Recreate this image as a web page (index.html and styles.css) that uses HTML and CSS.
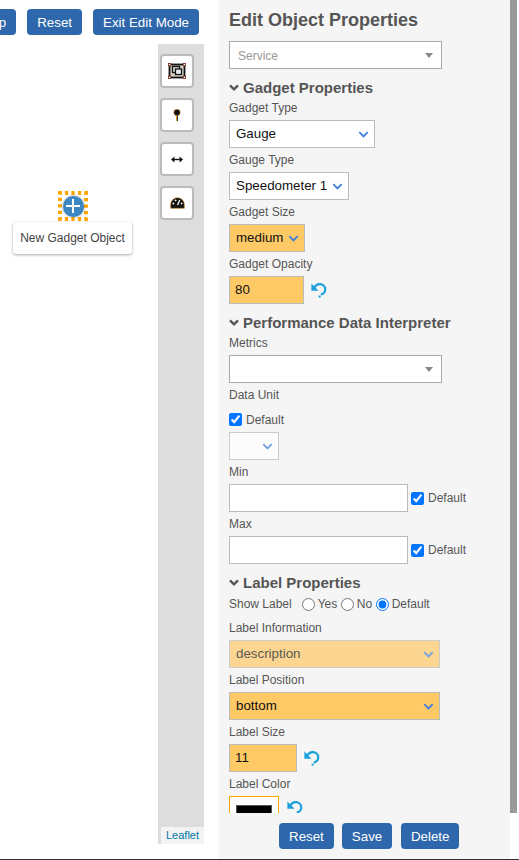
FILE: index.html
```html
<!DOCTYPE html>
<html lang="en">
<head>
  <meta charset="UTF-8">
  <title>Edit Object Properties</title>
  <link rel="stylesheet" href="styles.css">
</head>
<body>
  <svg class="defs" width="0" height="0">
    <symbol id="chev" viewBox="0 0 12 8"><path d="M1.2 1.4 6 6.2l4.8-4.8" fill="none" stroke="currentColor"/></symbol>
    <symbol id="undo" viewBox="0 0 16 16"><path d="M3.6 5.2C5 2.6 7.4 1.8 9.6 2.2c3 .6 4.9 3 4.6 5.8-.2 2.4-2 4-4.4 4.6" fill="none" stroke="#1ba1dc" stroke-width="2.2"/><path d="M.4 1.6v7.2h7.2z" fill="#1ba1dc"/><rect x="7.6" y="13.6" width="2" height="2" fill="#1ba1dc"/></symbol>
  </svg>

  <div class="page">
    <div class="left">
      <div class="topbar">
        <button class="btn cut">Map</button>
        <button class="btn">Reset</button>
        <button class="btn">Exit Edit Mode</button>
      </div>
      <div class="mapwrap">
        <div class="map">
          <div class="marker">
            <svg class="dots" width="30" height="30" viewBox="0 0 30 30"><rect x="2" y="2" width="26" height="26" fill="none" stroke="#ffa500" stroke-width="4" stroke-dasharray="3.25 3.25" stroke-dashoffset="1.6"/></svg>
            <span class="plus">
              <svg width="14" height="14" viewBox="0 0 14 14"><path d="M7 0v14M0 7h14" stroke="#fff" stroke-width="2"/></svg>
            </span>
          </div>
          <div class="tip">New Gadget Object</div>
        </div>
        <div class="strip">
          <div class="tool">
            <svg width="18" height="16" viewBox="0 0 18 16"><rect x="1.5" y="1.5" width="15" height="13" fill="#d8d2c4" stroke="#111" stroke-width="1.8"/><rect x="4.5" y="3.5" width="7" height="6" fill="#ddd" stroke="#111" stroke-width="1.3"/><rect x="7.5" y="6" width="6" height="5.5" fill="#eee" stroke="#111" stroke-width="1.3"/><g fill="#fff" stroke="#7a2a1a" stroke-width=".8"><rect x="0.4" y="0.4" width="2.4" height="2.4"/><rect x="15.2" y="0.4" width="2.4" height="2.4"/><rect x="0.4" y="13.2" width="2.4" height="2.4"/><rect x="15.2" y="13.2" width="2.4" height="2.4"/></g></svg>
          </div>
          <div class="tool">
            <svg width="8" height="12" viewBox="0 0 8 12"><path d="M3 6h1v6H3z" fill="#f39c12"/><path d="M4 6h1v6H4z" fill="#1a3a6a"/><circle cx="4" cy="3.4" r="3.2" fill="#111" stroke="#f5a623" stroke-width=".5"/></svg>
          </div>
          <div class="tool">
            <svg width="12" height="7" viewBox="0 0 12 7"><path d="M2 3.5h8" stroke="#111" stroke-width="1.4"/><path d="M0 3.5l3.4-3v6zM12 3.5l-3.4-3v6z" fill="#111"/></svg>
          </div>
          <div class="tool">
            <svg width="15" height="12" viewBox="0 0 15 12"><path d="M.7 11.3V7.5a6.8 6.8 0 0 1 13.6 0v3.8z" fill="#111" stroke="#c77a1a" stroke-width=".6"/><path d="M7.5 8 9.8 3" stroke="#fff" stroke-width="1.3"/><circle cx="3.4" cy="6.5" r=".9" fill="#fff"/><circle cx="5.6" cy="3.4" r=".9" fill="#fff"/><circle cx="11.6" cy="6.5" r=".9" fill="#fff"/></svg>
          </div>
          <a class="attrib">Leaflet</a>
        </div>
      </div>
    </div>

    <div class="panel">
      <div class="scroll">
        <h2 class="title">Edit Object Properties</h2>
        <div class="combo wide muted">
          <span>Service</span><i class="caret"></i>
        </div>

        <h3 class="section"><svg class="secchev"><use href="#chev"/></svg>Gadget Properties</h3>
        <label class="lbl first">Gadget Type</label>
        <div class="sel w146"><span>Gauge</span><svg class="chev"><use href="#chev"/></svg></div>
        <label class="lbl">Gauge Type</label>
        <div class="sel w120"><span>Speedometer 1</span><svg class="chev"><use href="#chev"/></svg></div>
        <label class="lbl">Gadget Size</label>
        <div class="sel w76 set"><span>medium</span><svg class="chev"><use href="#chev"/></svg></div>
        <label class="lbl">Gadget Opacity</label>
        <div class="row">
          <input class="inp w75 set" value="80">
          <svg class="undo"><use href="#undo"/></svg>
        </div>

        <h3 class="section"><svg class="secchev"><use href="#chev"/></svg>Performance Data Interpreter</h3>
        <label class="lbl first">Metrics</label>
        <div class="combo wide"><span></span><i class="caret"></i></div>
        <label class="lbl">Data Unit</label>
        <label class="check"><input type="checkbox" checked>Default</label>
        <div class="sel w50 off"><span></span><svg class="chev"><use href="#chev"/></svg></div>
        <label class="lbl">Min</label>
        <div class="row">
          <input class="inp w179">
          <label class="check tight"><input type="checkbox" checked>Default</label>
        </div>
        <label class="lbl">Max</label>
        <div class="row">
          <input class="inp w179">
          <label class="check tight"><input type="checkbox" checked>Default</label>
        </div>

        <h3 class="section"><svg class="secchev"><use href="#chev"/></svg>Label Properties</h3>
        <div class="radios">
          <span class="radiolbl">Show Label</span>
          <label><input type="radio" name="show">Yes</label>
          <label><input type="radio" name="show">No</label>
          <label><input type="radio" name="show" checked>Default</label>
        </div>
        <label class="lbl">Label Information</label>
        <div class="sel w211 set off"><span>description</span><svg class="chev"><use href="#chev"/></svg></div>
        <label class="lbl">Label Position</label>
        <div class="sel w211 set"><span>bottom</span><svg class="chev"><use href="#chev"/></svg></div>
        <label class="lbl">Label Size</label>
        <div class="row">
          <input class="inp w68 set" value="11">
          <svg class="undo"><use href="#undo"/></svg>
        </div>
        <label class="lbl">Label Color</label>
        <div class="row">
          <div class="swatch"><div></div></div>
          <svg class="undo near"><use href="#undo"/></svg>
        </div>
      </div>
      <div class="footer">
        <button class="btn">Reset</button>
        <button class="btn">Save</button>
        <button class="btn delete">Delete</button>
      </div>
    </div>
    <div class="sbar"><div class="thumb"></div></div>
  </div>
</body>
</html>
```

FILE: styles.css
```css
* {
  box-sizing: border-box;
}

body {
  margin: 0;
  height: 860px;
  overflow: hidden;
  background: #fff;
  color: #555;
  font-family: "Liberation Sans", Arial, sans-serif;
  font-size: 12px;
}

.defs {
  position: absolute;
}

.page {
  display: flex;
  height: 860px;
  border-bottom: 1px solid #333;
}

/* left side: buttons and map */
.left {
  width: 219px;
  flex: none;
  padding-right: 15px;
  overflow: hidden;
}

.topbar {
  height: 44px;
  padding-top: 9px;
  display: flex;
  justify-content: flex-end;
  gap: 11px;
  padding-right: 5px;
}

.btn {
  height: 26px;
  padding: 0 10px;
  border: 0;
  border-radius: 4px;
  background: #2e67ab;
  color: #fff;
  font-family: inherit;
  font-size: 13.33px;
  white-space: nowrap;
}

.cut {
  flex: none;
}

.mapwrap {
  display: flex;
  height: 800px;
}

.map {
  position: relative;
  flex: 1;
}

.marker {
  position: absolute;
  left: 58px;
  top: 147px;
  width: 30px;
  height: 30px;
  display: flex;
  align-items: center;
  justify-content: center;
}

.dots {
  position: absolute;
  left: 0;
  top: 0;
}

.plus {
  position: relative;
  flex: none;
  width: 21px;
  height: 21px;
  border-radius: 50%;
  background: #3a87c4;
  box-shadow: 0 0 3px rgba(0, 0, 0, 0.4);
  display: flex;
  align-items: center;
  justify-content: center;
}

.tip {
  position: absolute;
  left: 13px;
  top: 178px;
  width: 119px;
  height: 32px;
  line-height: 32px;
  text-align: center;
  background: #fff;
  color: #444;
  border-radius: 3px;
  box-shadow: 0 1px 3px rgba(0, 0, 0, 0.35);
}

.strip {
  position: relative;
  width: 46px;
  flex: none;
  background: #ddd;
  padding: 10px 0 0 2px;
  display: flex;
  flex-direction: column;
  gap: 10px;
}

.tool {
  width: 34px;
  height: 34px;
  background: #fff;
  border: 2px solid #bbb;
  border-radius: 4px;
  display: flex;
  align-items: center;
  justify-content: center;
}

.attrib {
  position: absolute;
  right: 0;
  bottom: 0;
  height: 17px;
  width: 43px;
  line-height: 17px;
  padding-left: 5px;
  background: #f3f3f3;
  color: #0078a8;
  font-size: 11px;
}

/* right side: properties panel */
.panel {
  width: 291px;
  flex: none;
  background: #f5f5f5;
  display: flex;
  flex-direction: column;
}

.scroll {
  height: 813px;
  overflow: hidden;
  padding: 0 0 0 10px;
}

.title {
  margin: 0;
  height: 41px;
  line-height: 40px;
  font-size: 18px;
  font-weight: bold;
  color: #555;
}

.section {
  display: flex;
  align-items: center;
  margin: 0;
  height: 19px;
  margin-top: 9px;
  font-size: 15px;
  font-weight: bold;
  color: #555;
}

.secchev {
  width: 10px;
  height: 7px;
  margin-right: 4px;
  color: #555;
  stroke-width: 2.8;
}

.lbl {
  display: block;
  height: 24px;
  line-height: 24px;
}

.lbl.first {
  height: 23px;
  line-height: 22px;
}

.combo,
.sel,
.inp {
  height: 28px;
  background: #fff;
  border: 1px solid #bbb;
  color: #111;
  font-family: inherit;
  font-size: 13.33px;
}

.combo {
  display: flex;
  align-items: center;
  justify-content: space-between;
  padding: 0 8px;
  border-color: #aaa;
}

.combo.muted {
  font-size: 12px;
  color: #999;
}

.combo.muted span {
  padding-top: 2px;
}

.wide {
  width: 213px;
}

.caret {
  width: 0;
  height: 0;
  border-left: 4px solid transparent;
  border-right: 4px solid transparent;
  border-top: 5px solid #888;
}

.sel {
  display: flex;
  align-items: center;
  justify-content: space-between;
  padding: 0 5px 0 6px;
}

.sel span {
  padding-bottom: 2px;
}

.chev {
  width: 11px;
  height: 7px;
  color: #3b7ddd;
  stroke-width: 2;
}

.set {
  background: #ffc966;
}

.off {
  opacity: 0.7;
}

.inp {
  display: block;
  padding: 0 5px 2px;
  outline: 0;
}

.w50 { width: 50px; }
.w68 { width: 68px; }
.w75 { width: 75px; }
.w76 { width: 76px; }
.w120 { width: 120px; }
.w146 { width: 146px; }
.w179 { width: 179px; }
.w211 { width: 211px; }

.row {
  display: flex;
  align-items: center;
}

.undo {
  width: 16px;
  height: 16px;
  margin-left: 7px;
}

.undo.near {
  margin-left: 8px;
  margin-top: 4px;
  align-self: flex-start;
}

.check {
  display: flex;
  align-items: center;
  height: 25px;
  margin-top: 0;
}

.check input {
  width: 13px;
  height: 13px;
  margin: 0 4px 0 0;
  accent-color: #0075ff;
}

.check.tight {
  margin-left: 3px;
}

.radios {
  display: flex;
  align-items: center;
  height: 24px;
}

.radiolbl {
  margin-right: 10px;
}

.radios label {
  display: flex;
  align-items: center;
  margin-right: 3.5px;
}

.radios input {
  width: 13px;
  height: 13px;
  margin: 0 3px 0 0;
  accent-color: #0075ff;
}

.swatch {
  width: 50px;
  height: 28px;
  background: #fff;
  border: 1px solid #ffa500;
  padding: 8px 6px 0;
}

.swatch div {
  height: 12px;
  background: #000;
  border: 1px solid #555;
}

.footer {
  display: flex;
  gap: 8px;
  padding: 10px 0 0 60px;
}

.delete {
  width: 58px;
  margin-left: 1px;
  padding: 0;
}

/* panel scrollbar */
.sbar {
  width: 7px;
  flex: none;
}

.thumb {
  height: 813px;
  background: #999;
}
```
